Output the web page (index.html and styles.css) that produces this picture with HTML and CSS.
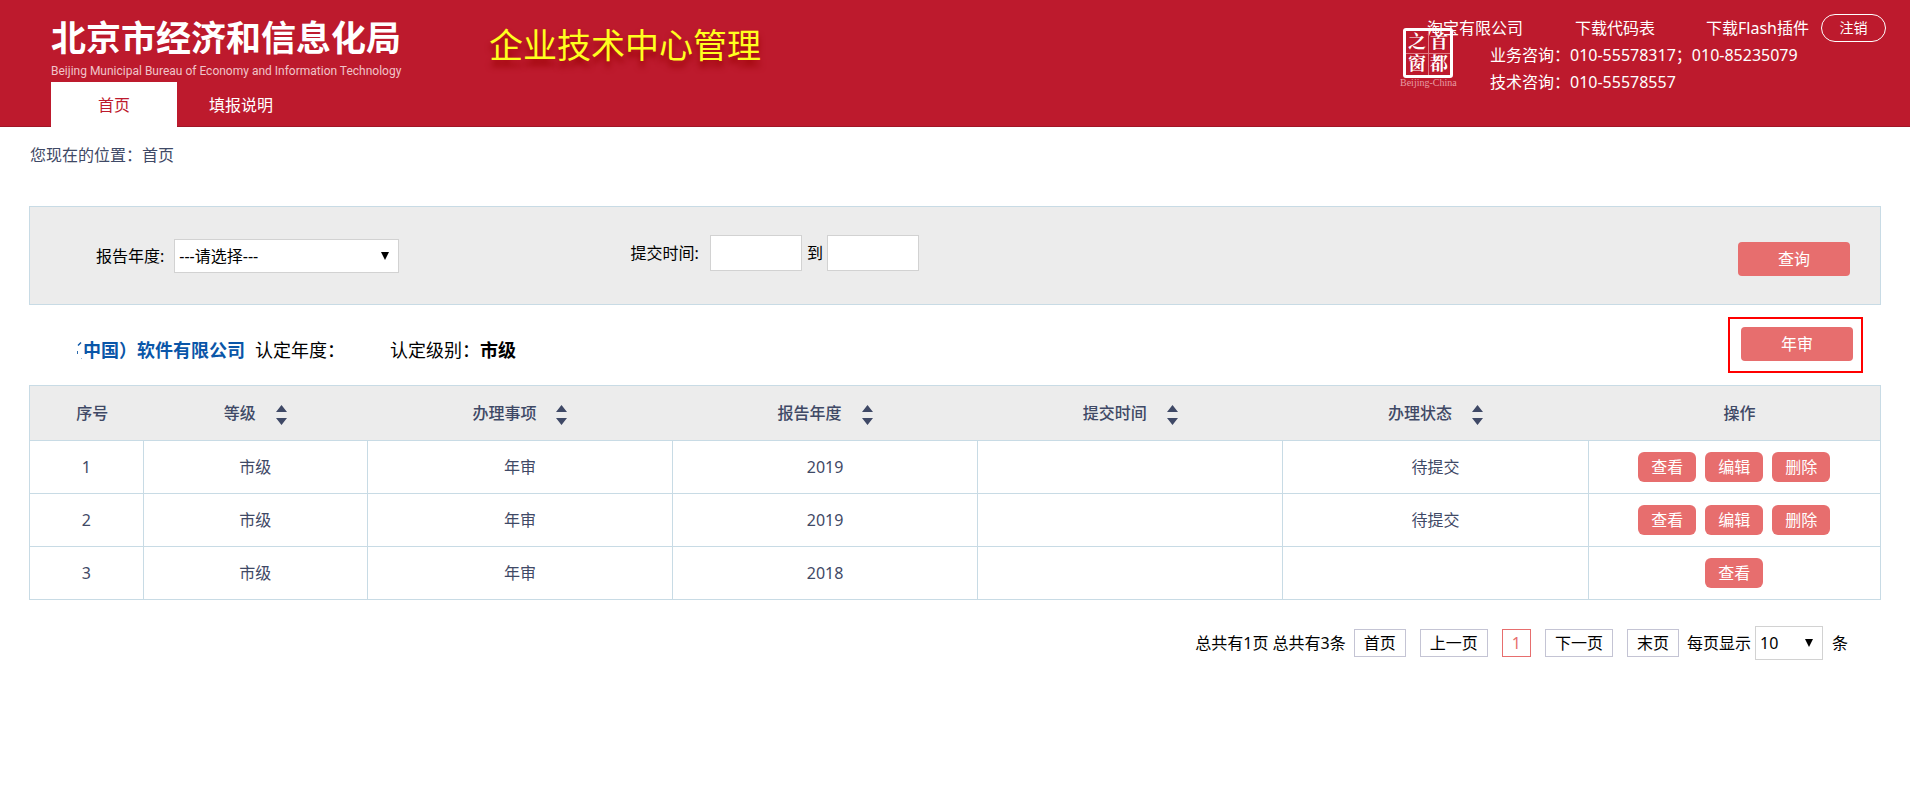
FILE: index.html
```html
<!DOCTYPE html>
<html lang="zh-CN">
<head>
<meta charset="utf-8">
<title>企业技术中心管理</title>
<link rel="stylesheet" href="styles.css">
</head>
<body>
<header class="header">
  <div class="brand">
    <div class="brand-name">北京市经济和信息化局</div>
    <div class="brand-sub">Beijing Municipal Bureau of Economy and Information Technology</div>
    <nav class="tabs">
      <a class="tab tab-active" href="#">首页</a>
      <a class="tab" href="#">填报说明</a>
    </nav>
  </div>
  <h1 class="system-name">企业技术中心管理</h1>
  <div class="account">
    <div class="account-row">
      <span class="account-company">淘宝有限公司</span>
      <a class="account-link" href="#">下载代码表</a>
      <a class="account-link" href="#">下载Flash插件</a>
      <button class="logout" type="button">注销</button>
    </div>
    <div class="contact">业务咨询：010-55578317；010-85235079</div>
    <div class="contact">技术咨询：010-55578557</div>
    <div class="seal">
      <div class="seal-box">
        <span>之</span><span>首</span><span>窗</span><span>都</span>
      </div>
      <div class="seal-caption">Beijing-China</div>
    </div>
  </div>
</header>

<main class="page">
  <div class="crumbs">您现在的位置：<a class="crumb" href="#">首页</a></div>

  <form class="search">
    <div class="field">
      <label for="year">报告年度:</label>
      <span class="picker picker-year">
        <select id="year"><option>---请选择---</option></select>
        <svg class="caret" width="8" height="8" viewBox="0 0 8 8"><path d="M0 0h8L4 8z"/></svg>
      </span>
    </div>
    <div class="field field-dates">
      <label for="from">提交时间:</label>
      <input class="date" id="from" type="text">
      <label class="to" for="until">到</label>
      <input class="date" id="until" type="text">
    </div>
    <button class="button button-search" type="button">查询</button>
  </form>

  <section class="company">
    <p class="company-text">
      <svg class="bracket" width="6" height="18" viewBox="0 0 6 18"><path d="M1 4.500L4 1.500" stroke="#0a56a8" stroke-width="1.500" fill="none"/><path d="M0 10h1v3H0z" fill="#2f6cae"/><path d="M4 17h1v1H4z" fill="#9db8d4"/></svg><strong class="company-name">中国）软件有限公司</strong>
      <span class="company-year">认定年度：</span>
      <span>认定级别：<strong>市级</strong></span>
    </p>
    <div class="highlight"><button class="button button-review" type="button">年审</button></div>
  </section>

  <table class="records">
    <colgroup><col class="c-no"><col class="c-level"><col class="c-mid"><col class="c-mid"><col class="c-mid"><col class="c-mid"><col class="c-act"></colgroup>
    <thead>
      <tr>
        <th class="plain">序号</th>
        <th>等级<svg class="sort" width="11" height="20" viewBox="0 0 11 20"><path d="M5.500 0L11 7H0zM0 13h11L5.500 20z"/></svg></th>
        <th>办理事项<svg class="sort" width="11" height="20" viewBox="0 0 11 20"><path d="M5.500 0L11 7H0zM0 13h11L5.500 20z"/></svg></th>
        <th>报告年度<svg class="sort" width="11" height="20" viewBox="0 0 11 20"><path d="M5.500 0L11 7H0zM0 13h11L5.500 20z"/></svg></th>
        <th>提交时间<svg class="sort" width="11" height="20" viewBox="0 0 11 20"><path d="M5.500 0L11 7H0zM0 13h11L5.500 20z"/></svg></th>
        <th>办理状态<svg class="sort" width="11" height="20" viewBox="0 0 11 20"><path d="M5.500 0L11 7H0zM0 13h11L5.500 20z"/></svg></th>
        <th class="plain">操作</th>
      </tr>
    </thead>
    <tbody>
      <tr>
        <td>1</td><td>市级</td><td>年审</td><td>2019</td><td></td><td>待提交</td>
        <td><div class="actions"><button class="action" type="button">查看</button><button class="action" type="button">编辑</button><button class="action" type="button">删除</button></div></td>
      </tr>
      <tr>
        <td>2</td><td>市级</td><td>年审</td><td>2019</td><td></td><td>待提交</td>
        <td><div class="actions"><button class="action" type="button">查看</button><button class="action" type="button">编辑</button><button class="action" type="button">删除</button></div></td>
      </tr>
      <tr>
        <td>3</td><td>市级</td><td>年审</td><td>2018</td><td></td><td></td>
        <td><div class="actions"><button class="action" type="button">查看</button></div></td>
      </tr>
    </tbody>
  </table>

  <div class="pager">
    <span>总共有1页 总共有3条</span>
    <nav class="pages">
      <a class="page-link" href="#">首页</a>
      <a class="page-link" href="#">上一页</a>
      <a class="page-link page-current" href="#">1</a>
      <a class="page-link" href="#">下一页</a>
      <a class="page-link" href="#">末页</a>
    </nav>
    <label class="per-page" for="size">每页显示</label>
    <span class="picker picker-size">
      <select id="size"><option>10</option></select>
      <svg class="caret" width="8" height="8" viewBox="0 0 8 8"><path d="M0 0h8L4 8z"/></svg>
    </span>
    <span class="unit">条</span>
  </div>
</main>
</body>
</html>
```
FILE: styles.css
```css
* {
  box-sizing: border-box;
}

body {
  margin: 0;
  background: #fff;
  color: #000;
  font: 16px/24px "Noto Sans", "Noto Sans CJK SC", sans-serif;
}

a {
  color: inherit;
  text-decoration: none;
}

button,
input,
select {
  font: inherit;
}

.header {
  display: flex;
  align-items: flex-start;
  background: #bd1a2d;
  box-shadow: inset 0 -1px #a01627;
  color: #fff;
  padding: 0 24px 0 51px;
}

.brand {
  width: 438px;
  padding-top: 16px;
}

.brand-name {
  font-size: 35px;
  line-height: 44px;
  font-weight: 700;
  white-space: nowrap;
}

.brand-sub {
  color: #f0c4c9;
  font-family: Roboto, sans-serif;
  font-size: 12px;
  line-height: 22px;
  white-space: nowrap;
}

.tabs {
  display: flex;
}

.tab {
  height: 45px;
  padding: 0 32px;
  line-height: 46px;
}

.tab-active {
  width: 126px;
  padding: 0;
  background: #fff;
  color: #bd1a2d;
  text-align: center;
}

.system-name {
  margin: 23px 0 0;
  color: #ffff1f;
  font-size: 34px;
  line-height: 44px;
  font-weight: 400;
  text-shadow: 0 6px 6px #900;
}

.account {
  position: relative;
  margin-left: auto;
  padding-top: 14px;
}

.account-row {
  display: flex;
  align-items: center;
  height: 28px;
}

.account-link {
  margin-left: 51px;
}

.account-company + .account-link {
  margin-left: 52px;
}

.logout {
  width: 65px;
  height: 28px;
  margin-left: 12px;
  padding: 0;
  border: 1px solid #fff;
  border-radius: 14px;
  background: none;
  color: #fff;
  font-size: 14px;
  line-height: 24px;
}

.contact {
  padding-left: 63px;
  line-height: 27px;
}

.seal {
  position: absolute;
  top: 28px;
  left: -27px;
  width: 56px;
}

.seal-box {
  display: grid;
  grid-template-columns: 1fr 1fr;
  width: 50px;
  height: 50px;
  margin: 0 auto;
  border: 3px solid #fff;
  border-radius: 3px;
  background: linear-gradient(#e07a85, #e07a85) 50% / 1px 100% no-repeat, linear-gradient(#e07a85, #e07a85) 50% / 100% 1px no-repeat;
  font: 700 18px/22px "Liberation Serif", "Noto Serif CJK SC", "Noto Sans CJK SC", serif;
  text-align: center;
}

.seal-caption {
  color: #e79aa3;
  font: 10px/10px "Liberation Serif", serif;
  text-align: center;
  white-space: nowrap;
}

.page {
  padding: 16px 29px 0;
}

.crumbs {
  padding-left: 1px;
  color: #3f4966;
}

.search {
  display: grid;
  grid-template-columns: 14fr 29fr auto;
  align-items: center;
  height: 99px;
  margin-top: 39px;
  padding: 0 30px 0 66px;
  border: 1px solid #c8dbe5;
  background: #ececec;
}

.field {
  display: flex;
  align-items: center;
}

.field-dates {
  padding-bottom: 5px;
}

.picker {
  display: grid;
  align-items: center;
}

.picker select,
.picker .caret {
  grid-area: 1 / 1;
}

.picker select {
  appearance: none;
  width: 100%;
  height: 34px;
  padding: 0 4px;
  border: 1px solid #d2d2d2;
  border-radius: 0;
  background: #fff;
  color: #000;
}

.caret {
  justify-self: end;
  margin-right: 10px;
  pointer-events: none;
}

.picker-year {
  width: 225px;
  margin-left: 10px;
}

.date {
  width: 92px;
  height: 36px;
  margin-left: 11px;
  border: 1px solid #d2d2d2;
}

.to {
  margin-left: 5px;
}

.to + .date {
  margin-left: 4px;
}

.button {
  width: 112px;
  height: 34px;
  padding: 0;
  border: 0;
  border-radius: 4px;
  background: #e76e6e;
  color: #fff;
}

.button-search {
  margin-top: 6px;
}

.button-review {
  display: block;
}

.company {
  display: flex;
  align-items: center;
  justify-content: space-between;
  margin-top: 12px;
  padding: 0 18px 0 48px;
  font-size: 18px;
}

.company-text {
  display: flex;
  margin: 10px 0 0;
}

.bracket {
  margin-top: 3px;
}

.company-name {
  color: #0a56a8;
}

.company-year {
  width: 135px;
  margin-left: 10px;
}

.highlight {
  padding: 8px 8px 10px 11px;
  border: 2px solid #f00;
  font-size: 16px;
}

.records {
  width: 100%;
  margin-top: 12px;
  border-collapse: collapse;
  table-layout: fixed;
  border: 1px solid #c8dbe5;
  color: #3f4966;
  text-align: center;
}

.c-no {
  width: 6.15%;
}

.c-level {
  width: 12.1%;
}

.c-mid {
  width: 16.49%;
}

.records th {
  height: 55px;
  padding: 0;
  background: #ececec;
  font-weight: 500;
}

.records .plain {
  padding-left: 11px;
}

.sort {
  margin-left: 20px;
  fill: #3f4966;
  vertical-align: middle;
}

.records td {
  height: 53px;
  padding: 0;
  border: 1px solid #c8dbe5;
}

.actions {
  display: flex;
  justify-content: center;
  gap: 9px;
}

.action {
  width: 58px;
  height: 30px;
  padding: 0;
  border: 0;
  border-radius: 6px;
  background: #e76e6e;
  color: #fff;
}

.pager {
  display: flex;
  align-items: center;
  justify-content: flex-end;
  margin-top: 26px;
  padding-right: 33px;
}

.pages {
  display: flex;
  gap: 14px;
  margin: 0 8px;
}

.page-link {
  padding: 0 9px;
  border: 1px solid #c4c4d4;
  line-height: 26px;
}

.page-current {
  border-color: #e76e6e;
  color: #e76e6e;
}

.picker-size {
  width: 68px;
  margin-left: 4px;
}

.unit {
  margin-left: 9px;
}
```
